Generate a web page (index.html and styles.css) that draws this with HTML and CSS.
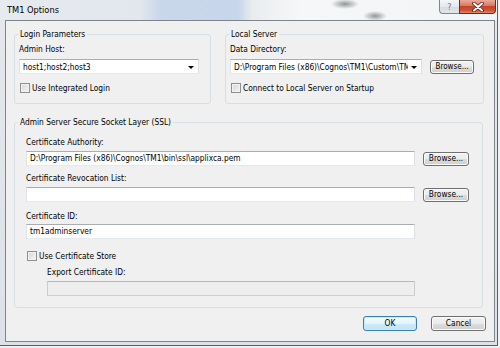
FILE: index.html
```html
<!DOCTYPE html>
<html lang="en">
<head>
    <meta charset="UTF-8">
    <title>TM1 Options</title>
    <link rel="stylesheet" href="styles.css">
</head>
<body>
    <div class="window">
        <div class="titlebar">
            <span class="title">TM1 Options</span>
            <div class="caption-buttons">
                <span class="cap help">?</span>
                <span class="cap close">
                    <svg width="14" height="10" viewBox="0 0 14 10">
                        <path d="M3 1.5 L11 8.5 M11 1.5 L3 8.5" stroke="#5a1d12" stroke-width="3.6" stroke-linecap="round"/>
                        <path d="M3 1.5 L11 8.5 M11 1.5 L3 8.5" stroke="#ffffff" stroke-width="2" stroke-linecap="round"/>
                    </svg>
                </span>
            </div>
        </div>

        <div class="client">
            <div class="top-row">
                <fieldset class="group login">
                    <legend>Login Parameters</legend>
                    <div class="group-body">
                        <div class="caption">Admin Host:</div>
                        <div class="combo login-combo">
                            <span class="combo-text">host1;host2;host3</span>
                            <span class="arrow"></span>
                        </div>
                        <div class="check"><span class="box"></span>Use Integrated Login</div>
                    </div>
                </fieldset>

                <fieldset class="group local">
                    <legend>Local Server</legend>
                    <div class="group-body">
                        <div class="caption">Data Directory:</div>
                        <div class="field-row">
                            <div class="combo dir-combo">
                                <span class="combo-text">D:\Program Files (x86)\Cognos\TM1\Custom\TM</span>
                                <span class="arrow"></span>
                            </div>
                            <button class="btn browse small">Browse...</button>
                        </div>
                        <div class="check local-check"><span class="box"></span>Connect to Local Server on Startup</div>
                    </div>
                </fieldset>
            </div>

            <fieldset class="group ssl">
                <legend>Admin Server Secure Socket Layer (SSL)</legend>
                <div class="group-body">
                    <div class="caption">Certificate Authority:</div>
                    <div class="field-row gap3">
                        <div class="input wide">D:\Program Files (x86)\Cognos\TM1\bin\ssl\applixca.pem</div>
                        <button class="btn browse">Browse...</button>
                    </div>
                    <div class="caption gap6">Certificate Revocation List:</div>
                    <div class="field-row gap3">
                        <div class="input wide"></div>
                        <button class="btn browse">Browse...</button>
                    </div>
                    <div class="caption gap8">Certificate ID:</div>
                    <div class="input wide gap2">tm1adminserver</div>
                    <div class="check store-check"><span class="box"></span>Use Certificate Store</div>
                    <div class="caption indent gap4">Export Certificate ID:</div>
                    <div class="input disabled indent gap3"></div>
                </div>
            </fieldset>

            <div class="actions">
                <button class="btn action default">OK</button>
                <button class="btn action">Cancel</button>
            </div>
        </div>
    </div>
</body>
</html>
```

FILE: styles.css
```css
body {
    margin: 0;
    width: 500px;
    height: 348px;
    overflow: hidden;
    background: #eef0f2;
    font-family: "DejaVu Sans Condensed", "DejaVu Sans", sans-serif;
    font-stretch: condensed;
    font-size: 8.3px;
    color: #000;
}
.window {
    width: 497px;
    height: 345px;
    border-right: 1px solid #5d6169;
    border-bottom: 1px solid #5d6169;
    background: linear-gradient(to bottom, #e4e8ed, #dde2e8);
    display: flex;
    flex-direction: column;
}
.titlebar {
    height: 20px;
    display: flex;
    align-items: flex-start;
    background:
        radial-gradient(ellipse 14px 5px at 345px 4px, rgba(60,70,70,0.55), transparent),
        radial-gradient(ellipse 12px 5px at 375px 16px, rgba(50,55,60,0.5), transparent),
        linear-gradient(to right, #e7eaee 0, #e2e7ee 140px, #c9d7eb 160px, #c7d6ea 238px, #e9ecef 252px, #f6f7f8 300px, #f3f4f6 500px);
}
.title {
    flex: 1;
    padding: 4px 0 0 7px;
    font-size: 9.2px;
    line-height: 12px;
}
.caption-buttons {
    display: flex;
    margin-right: 1px;
}
.cap {
    height: 14px;
    box-sizing: border-box;
    display: flex;
    align-items: center;
    justify-content: center;
    border: 1px solid #80868f;
    border-top: none;
}
.help {
    width: 20px;
    border-right: none;
    border-radius: 0 0 0 4px;
    background: linear-gradient(to bottom, #f4f6f8, #e4e8ec 50%, #d6dbe1 51%, #e2e6ea);
    color: #6f7680;
    font-size: 9px;
}
.close {
    width: 37px;
    border-color: #6d2a1f;
    border-radius: 0 0 4px 0;
    background: linear-gradient(to bottom, #e9a99b, #d7795f 45%, #c6432a 50%, #d05234 80%, #e2886a);
}
.client {
    margin-left: 5px;
    width: 472px;
    height: 320px;
    border: 1px solid #7f858d;
    background: #f0f0f0;
    padding: 0 8px;
}
.top-row {
    display: flex;
    gap: 14px;
    margin-top: 7px;
}
.group {
    margin: 0;
    padding: 0 0 10px 0;
    border: 1px solid #d5dfe5;
    border-radius: 3px;
    min-width: 0;
    box-sizing: border-box;
}
.group legend {
    margin-left: 3px;
    padding: 0 2px;
    line-height: 12px;
    height: 12px;
}
.login {
    width: 197px;
}
.local {
    width: 259px;
}
.login .group-body, .local .group-body {
    padding: 3px 0 0 4px;
}
.caption {
    line-height: 12px;
    height: 12px;
}
.combo {
    margin-top: 4px;
    height: 15px;
    box-sizing: border-box;
    border: 1px solid #abadb3;
    border-color: #abadb3 #dbdfe6 #e3e9ef #e2e3ea;
    background: #fff;
    display: flex;
    align-items: center;
}
.combo-text {
    flex: 1;
    overflow: hidden;
    white-space: nowrap;
    line-height: 12px;
    padding-left: 3px;
}
.login-combo {
    width: 180px;
}
.dir-combo {
    width: 192px;
    margin-top: 0;
}
.arrow {
    width: 0;
    height: 0;
    margin: 1px 4px 0 3px;
    border-left: 3px solid transparent;
    border-right: 3px solid transparent;
    border-top: 3px solid #000;
}
.field-row {
    display: flex;
    align-items: center;
    margin-top: 4px;
}
.check {
    display: flex;
    align-items: center;
    height: 11px;
    margin-top: 8px;
    margin-left: 1px;
    line-height: 12px;
}
.box {
    width: 10px;
    height: 10px;
    box-sizing: border-box;
    border: 1px solid #8e8f8f;
    background: linear-gradient(135deg, #d6d6d6, #f6f6f6);
    box-shadow: inset 0 0 0 1px #f2f2f2;
    margin-right: 2px;
}
.btn {
    font-family: inherit;
    font-stretch: condensed;
    font-size: 8.3px;
    color: #000;
    padding: 0;
    white-space: nowrap;
    box-sizing: border-box;
    border: 1px solid #707070;
    border-radius: 3px;
    background: linear-gradient(to bottom, #f2f2f2 0%, #ebebeb 50%, #dddddd 51%, #cfcfcf 100%);
    box-shadow: inset 0 0 0 1px #fafafa;
    line-height: 11px;
}
.browse {
    width: 46px;
    height: 14px;
    margin-left: 8px;
}
.browse.small {
    width: 44px;
    font-size: 8px;
}
.ssl {
    width: 469px;
    margin-top: 12px;
    padding-bottom: 11px;
}
.ssl .group-body {
    padding: 8px 0 0 11px;
}
.input {
    height: 15px;
    box-sizing: border-box;
    border: 1px solid #abadb3;
    border-color: #abadb3 #dbdfe6 #e3e9ef #e2e3ea;
    background: #fff;
    padding-left: 3px;
    line-height: 13px;
    white-space: nowrap;
    overflow: hidden;
}
.input.wide {
    width: 389px;
}
.input.disabled {
    width: 368px;
    background: #eeeeee;
    border-color: #b8b8b8 #cccccc #d0d0d0 #cccccc;
}
.indent {
    margin-left: 21px;
}
.gap2 { margin-top: 2px; }
.gap3 { margin-top: 3px; }
.gap4 { margin-top: 4px; }
.gap6 { margin-top: 6px; }
.gap8 { margin-top: 8px; }
.store-check {
    margin-top: 11px;
    height: 12px;
}
.actions {
    display: flex;
    justify-content: flex-end;
    gap: 14px;
    margin-top: 8px;
}
.action {
    width: 55px;
    height: 15px;
}
.action.default {
    width: 54px;
    border-color: #3c7fb1;
    background: linear-gradient(to bottom, #f4fbfe 0%, #e3f4fc 50%, #cfebfa 51%, #bde3f7 100%);
    box-shadow: inset 0 0 0 1px #c6ecfc;
}
```
